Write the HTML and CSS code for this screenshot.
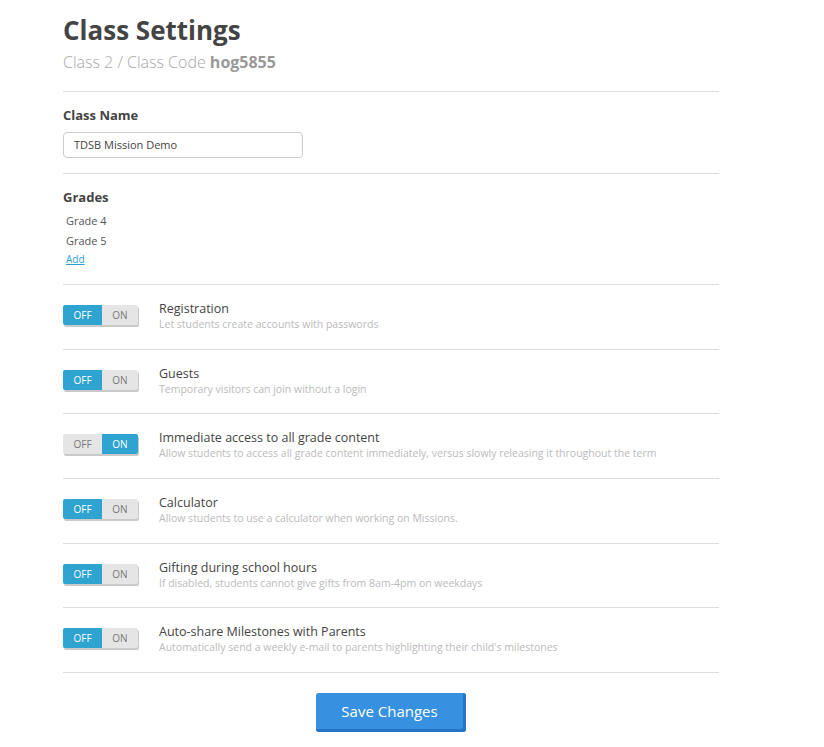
FILE: index.html
```html
<!DOCTYPE html>
<html>
<head>
<meta charset="utf-8">
<link rel="stylesheet" href="styles.css">
</head>
<body>
<div class="page">
  <header class="head">
    <h1 class="title">Class Settings</h1>
    <div class="sub">Class 2 / Class Code <b>hog5855</b></div>
  </header>
  <section class="block name-block">
    <div class="label">Class Name</div>
    <div class="input">TDSB Mission Demo</div>
  </section>
  <section class="block grades-block">
    <div class="label">Grades</div>
    <div class="grade">Grade 4</div>
    <div class="grade">Grade 5</div>
    <a class="add" href="#">Add</a>
  </section>
  <div class="row">
    <div class="toggle"><span class="opt on">OFF</span><span class="opt">ON</span></div>
    <div class="text"><div class="rt">Registration</div><div class="rd">Let students create accounts with passwords</div></div>
  </div>
  <div class="row">
    <div class="toggle"><span class="opt on">OFF</span><span class="opt">ON</span></div>
    <div class="text"><div class="rt">Guests</div><div class="rd">Temporary visitors can join without a login</div></div>
  </div>
  <div class="row">
    <div class="toggle"><span class="opt">OFF</span><span class="opt on">ON</span></div>
    <div class="text"><div class="rt">Immediate access to all grade content</div><div class="rd">Allow students to access all grade content immediately, versus slowly releasing it throughout the term</div></div>
  </div>
  <div class="row">
    <div class="toggle"><span class="opt on">OFF</span><span class="opt">ON</span></div>
    <div class="text"><div class="rt">Calculator</div><div class="rd">Allow students to use a calculator when working on Missions.</div></div>
  </div>
  <div class="row">
    <div class="toggle"><span class="opt on">OFF</span><span class="opt">ON</span></div>
    <div class="text"><div class="rt">Gifting during school hours</div><div class="rd">If disabled, students cannot give gifts from 8am-4pm on weekdays</div></div>
  </div>
  <div class="row last">
    <div class="toggle"><span class="opt on">OFF</span><span class="opt">ON</span></div>
    <div class="text"><div class="rt">Auto-share Milestones with Parents</div><div class="rd">Automatically send a weekly e-mail to parents highlighting their child's milestones</div></div>
  </div>
  <div class="actions"><button class="save">Save Changes</button></div>
</div>
</body>
</html>
```
FILE: styles.css
```css
* { box-sizing: border-box; }
body {
  margin: 0;
  background: #fff;
  font-family: "Open Sans", "Liberation Sans", sans-serif;
  color: #444;
}
.page {
  width: 656px;
  margin-left: 63px;
}
.head {
  padding-top: 13px;
  padding-bottom: 19px;
  border-bottom: 1px solid #ddd;
}
.title {
  margin: 0;
  font-size: 26px;
  line-height: 34px;
  font-weight: 700;
  color: #444;
}
.sub {
  margin-top: 5px;
  font-size: 16px;
  line-height: 20px;
  font-weight: 300;
  color: #aaa;
}
.sub b { font-weight: 700; color: #999; }
.block { border-bottom: 1px solid #ddd; }
.label {
  font-size: 13px;
  line-height: 18px;
  font-weight: 700;
  color: #444;
}
.name-block { padding-top: 14px; padding-bottom: 15px; }
.name-block .label { margin-bottom: 8px; }
.input {
  width: 240px;
  height: 26px;
  border: 1px solid #ccc;
  border-radius: 4px;
  padding: 0 10px;
  font-size: 11px;
  line-height: 24px;
  color: #444;
}
.grades-block { padding-top: 14px; padding-bottom: 16px; }
.grades-block .label { margin-bottom: 5px; }
.grade {
  font-size: 11px;
  line-height: 20px;
  padding-left: 3px;
  color: #555;
}
.add {
  display: block;
  padding-left: 3px;
  font-size: 10px;
  line-height: 17px;
  color: #2a9fd6;
}
.row {
  display: flex;
  align-items: flex-start;
  padding: 16px 0 17.67px;
  border-bottom: 1px solid #ddd;
}
.toggle {
  display: flex;
  margin-top: 4px;
  width: 75px;
  height: 20px;
  border-radius: 2px;
  box-shadow: 1px 2px 0 #c9c9c9;
  background: #e5e5e5;
  overflow: hidden;
  flex: none;
}
.opt {
  flex: 1;
  display: flex;
  align-items: center;
  justify-content: center;
  font-size: 10px;
  color: #777;
}
.opt:first-child { flex: 0 0 39px; }
.opt.on { background: #2fa4d0; color: #fff; }
.text { margin-left: 21px; }
.rt {
  font-size: 12.5px;
  line-height: 16px;
  color: #444;
}
.rd {
  font-size: 10.5px;
  line-height: 14px;
  color: #bbb;
}
.actions {
  display: flex;
  justify-content: center;
  padding-top: 20px;
}
.save {
  width: 150px;
  height: 39px;
  border: none;
  border-radius: 3px;
  background: #3891e0;
  box-shadow: inset -3px -3px 0 #2474c8;
  color: #fff;
  font-family: "Open Sans", "Liberation Sans", sans-serif;
  font-size: 15px;
  padding: 0 3px 3px 0;
}
```
